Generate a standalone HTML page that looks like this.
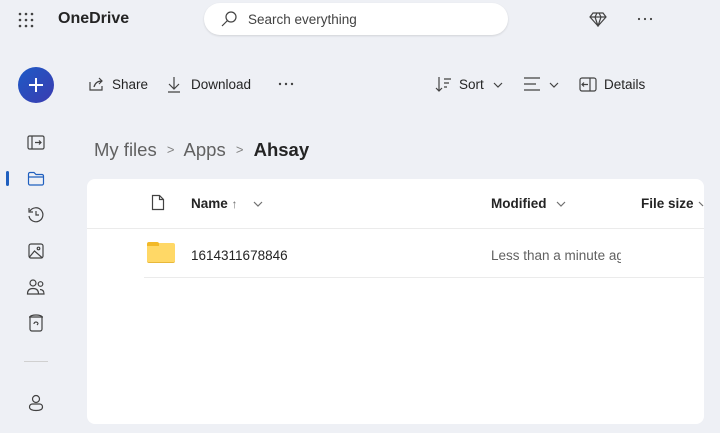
<!DOCTYPE html>
<html><head><style>
*{margin:0;padding:0;box-sizing:border-box}
body{width:720px;height:433px;overflow:hidden;background:#eef0f5;font-family:"Liberation Sans",sans-serif;color:#242424;position:relative}
.a{position:absolute}
svg{position:absolute;fill:none;stroke:#424242;stroke-width:1.2}
.t{font-size:13.5px;color:#242424;white-space:nowrap}
</style></head><body>
<svg style="left:18px;top:12px" width="16" height="16"><g fill="#424242" stroke="none"><circle cx="2" cy="2" r="1.3"/><circle cx="8" cy="2" r="1.3"/><circle cx="14" cy="2" r="1.3"/><circle cx="2" cy="8" r="1.3"/><circle cx="8" cy="8" r="1.3"/><circle cx="14" cy="8" r="1.3"/><circle cx="2" cy="14" r="1.3"/><circle cx="8" cy="14" r="1.3"/><circle cx="14" cy="14" r="1.3"/></g></svg>
<div class="a" style="left:58px;top:10px;font-size:16px;font-weight:bold;color:#242424">OneDrive</div>
<div class="a" style="left:204px;top:3px;width:304px;height:32px;background:#fff;border-radius:16px;box-shadow:0 1px 2px rgba(0,0,0,.12)"></div>
<svg style="left:220px;top:10px" width="18" height="18"><circle cx="11" cy="7" r="5"/><path d="M7.5 10.5L2 16"/></svg>
<div class="a t" style="left:248px;top:12px;color:#424242">Search everything</div>
<svg style="left:589px;top:11px" width="18" height="16"><path d="M4 2h10l3 4-8 9-8-9z M1 6h16 M6 6l3 9 3-9 M6 6l2-4 M12 6l-2-4"/></svg>
<svg style="left:637px;top:17px" width="18" height="4"><g fill="#424242" stroke="none"><circle cx="2" cy="2" r="1.1"/><circle cx="8" cy="2" r="1.1"/><circle cx="14" cy="2" r="1.1"/></g></svg>
<div class="a" style="left:18px;top:67px;width:36px;height:36px;border-radius:50%;background:linear-gradient(135deg,#1e5bc6,#3b3bb0)"></div>
<svg style="left:27px;top:76px;stroke:#fff;stroke-width:2" width="18" height="18"><path d="M9 2v14M2 9h14"/></svg>
<svg style="left:88px;top:76px" width="17" height="16"><path d="M2 6v8h12v-4 M6 11c1-4 4-6 8-6 M11 2l3 3-3 3"/></svg>
<div class="a t" style="left:112px;top:77px">Share</div>
<svg style="left:166px;top:76px" width="16" height="17"><path d="M8 1v12M3 8l5 5 5-5M2 16h12"/></svg>
<div class="a t" style="left:191px;top:77px">Download</div>
<svg style="left:278px;top:82px" width="18" height="4"><g fill="#424242" stroke="none"><circle cx="2" cy="2" r="1.2"/><circle cx="8" cy="2" r="1.2"/><circle cx="14" cy="2" r="1.2"/></g></svg>
<svg style="left:435px;top:76px" width="18" height="17"><path d="M4 1v14M1 12l3 3 3-3M9 3h7M9 7h5M9 11h3"/></svg>
<div class="a t" style="left:459px;top:77px">Sort</div>
<svg style="left:493px;top:82px" width="10" height="6"><path d="M1 1l4 4 4-4"/></svg>
<svg style="left:523px;top:76px" width="18" height="16"><path d="M1 2h16M1 8h12M1 14h16"/></svg>
<svg style="left:549px;top:82px" width="10" height="6"><path d="M1 1l4 4 4-4"/></svg>
<svg style="left:579px;top:77px" width="18" height="15"><rect x="1" y="1" width="16" height="13" rx="2"/><path d="M11 1v13M3 7.5h6M5 5.5l-2 2 2 2"/></svg>
<div class="a t" style="left:604px;top:77px">Details</div>
<svg style="left:27px;top:135px" width="18" height="16"><rect x="1" y="1" width="16" height="13" rx="1.5"/><path d="M5 1v13M8 7.5h6M12 5.5l2 2-2 2"/></svg>
<div class="a" style="left:6px;top:171px;width:3px;height:15px;background:#1f5fbf;border-radius:2px"></div>
<svg style="left:27px;top:171px;stroke:#1f5fbf" width="18" height="16"><path d="M1.5 3a1.5 1.5 0 011.5-1.5h4l2 2h6a1.5 1.5 0 011.5 1.5v7.5a1.5 1.5 0 01-1.5 1.5H3A1.5 1.5 0 011.5 12.5z M1.5 6h15"/></svg>
<svg style="left:27px;top:206px" width="18" height="18"><path d="M3 5a7 7 0 11-1 5M2 2v4h4M9 5v4h3"/></svg>
<svg style="left:27px;top:242px" width="18" height="18"><rect x="2" y="2" width="14" height="14" rx="2"/><circle cx="11.5" cy="6.5" r="1.3"/><path d="M2.5 15l5-6 8 7"/></svg>
<svg style="left:26px;top:278px" width="20" height="18"><circle cx="7" cy="5" r="3"/><path d="M1.5 16c0-4 2.5-5.5 5.5-5.5s5.5 1.5 5.5 5.5z"/><circle cx="14.5" cy="6" r="2.3"/><path d="M13 16h5c0-3-1.5-4.5-4-4.5"/></svg>
<svg style="left:28px;top:314px" width="16" height="18"><path d="M1 3h14M2 3v12a2 2 0 002 2h8a2 2 0 002-2V3M2 3a6 2 0 0112 0"/><path d="M6 10a2 2 0 014 0M10 10l-1 1"/></svg>
<div class="a" style="left:24px;top:361px;width:24px;height:1px;background:#d0d0d0"></div>
<svg style="left:28px;top:394px" width="16" height="18"><circle cx="8" cy="5" r="3.5"/><path d="M1.5 13c0-2 1.5-3 3-3h7c1.5 0 3 1 3 3 0 2.5-3 3.5-6.5 3.5S1.5 15.5 1.5 13z"/></svg>
<div class="a" style="left:94px;top:139px;font-size:18.5px;color:#616161;white-space:nowrap">My files <span style="font-size:13px;margin:0 5px;position:relative;top:-2px;color:#808080">&gt;</span> Apps <span style="font-size:13px;margin:0 5px;position:relative;top:-2px;color:#808080">&gt;</span> <b style="color:#242424">Ahsay</b></div>
<div class="a" style="left:87px;top:179px;width:617px;height:245px;background:#fff;border-radius:8px"></div>
<div class="a" style="left:87px;top:228px;width:617px;height:1px;background:#ebebeb"></div>
<div class="a" style="left:144px;top:277px;width:560px;height:1px;background:#ebebeb"></div>
<svg style="left:151px;top:194px" width="14" height="17"><path d="M1.5 1.5h7l4 4v10h-11z M8.5 1.5v4h4"/></svg>
<div class="a t" style="left:191px;top:196px;font-weight:bold">Name <span style="font-weight:normal;color:#707070;font-size:12px">↑</span></div>
<svg style="left:253px;top:201px;stroke:#707070" width="10" height="6"><path d="M1 1l4 4 4-4"/></svg>
<div class="a t" style="left:491px;top:196px;font-weight:bold">Modified</div>
<svg style="left:556px;top:201px;stroke:#707070" width="10" height="6"><path d="M1 1l4 4 4-4"/></svg>
<div class="a t" style="left:641px;top:196px;font-weight:bold">File size</div>
<svg style="left:698px;top:201px;stroke:#707070" width="6" height="6"><path d="M1 1l4 4"/></svg>
<div class="a" style="left:147px;top:243px;width:28px;height:20px;background:#ffd866;border-radius:2px;border-bottom:1px solid #e8b83a"></div>
<div class="a" style="left:147px;top:242px;width:12px;height:4px;background:#f2b928;border-radius:2px 2px 0 0"></div>
<div class="a t" style="left:191px;top:248px">1614311678846</div>
<div class="a t" style="left:491px;top:248px;color:#616161;width:130px;overflow:hidden">Less than a minute ago</div>
</body></html>
